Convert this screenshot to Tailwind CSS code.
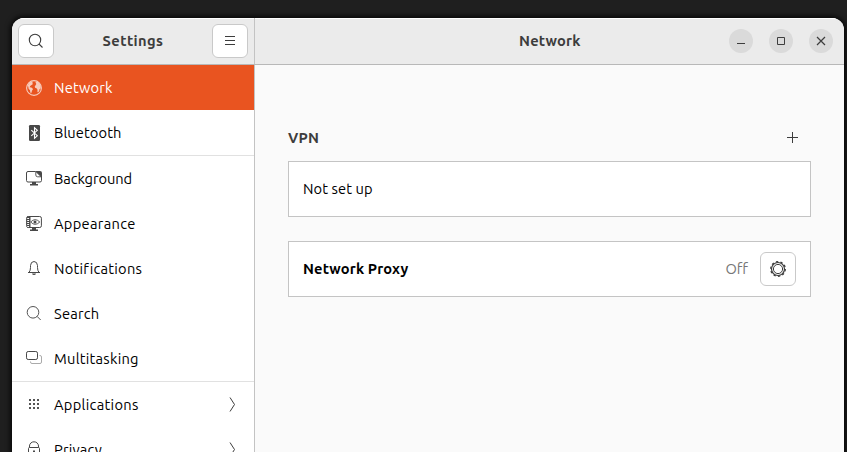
<!DOCTYPE html>
<html lang="en">
<head>
<meta charset="utf-8">
<title>Settings</title>
<script src="https://cdn.jsdelivr.net/npm/@tailwindcss/browser@4"></script>
</head>
<body class="h-[452px] w-[847px] overflow-hidden bg-[#1f1f1f] pt-[18px] pl-3 font-['Ubuntu','Noto_Sans',sans-serif] text-[14.667px] leading-5 text-black">
<div class="flex h-[434px] w-[832px] flex-col overflow-hidden rounded-t-xl bg-[#fafafa] shadow-[0_0_5px_2px_rgba(0,0,0,0.75)]">
  <header class="flex h-[47px] shrink-0 border-b border-[#b8b8b8] bg-[#ebebeb] font-bold text-[#3d3d3d] shadow-[inset_0_1px_0_#fff]">
    <div class="flex w-[243px] shrink-0 items-center justify-between border-r border-[#c3c3c3] px-1.5">
      <button class="flex h-[34px] w-9 items-center justify-center rounded-md border border-[#c9c9c9] bg-white" aria-label="Search">
        <svg class="size-4" viewBox="0 0 16 16" fill="none" stroke="#3d3d3d" stroke-width="1.1"><circle cx="7" cy="7" r="5.7"/><path d="M11 11l3.5 3.5"/></svg>
      </button>
      <h1 class="tracking-[0.4px]">Settings</h1>
      <button class="flex h-[34px] w-9 items-center justify-center rounded-md border border-[#c9c9c9] bg-white" aria-label="Menu">
        <svg class="size-4" viewBox="0 0 16 16" fill="#3d3d3d"><path d="M3 3h10v1H3zM3 7h10v1H3zM3 11h10v1H3z"/></svg>
      </button>
    </div>
    <div class="flex flex-1 items-center pr-[11px] pl-[264px]">
      <h2 class="tracking-[0.2px]">Network</h2>
      <div class="ml-auto flex gap-4">
        <button class="size-6 rounded-full bg-[#dadada]" aria-label="Minimize"><svg class="size-6" viewBox="0 0 24 24" fill="#3d3d3d"><path d="M8 14h8v1H8z"/></svg></button>
        <button class="size-6 rounded-full bg-[#dadada]" aria-label="Maximize"><svg class="size-6" viewBox="0 0 24 24" fill="none" stroke="#3d3d3d"><path d="M8.5 8.5h7v7h-7z"/></svg></button>
        <button class="size-6 rounded-full bg-[#dadada]" aria-label="Close"><svg class="size-6" viewBox="0 0 24 24" fill="none" stroke="#3d3d3d" stroke-width="1.2"><path d="M8 8l8 8M16 8l-8 8"/></svg></button>
      </div>
    </div>
  </header>
  <div class="flex min-h-0 flex-1 overflow-hidden">
    <nav class="w-[243px] shrink-0 border-r border-[#c3c3c3] bg-white">
      <a class="flex h-[45px] items-center gap-3 bg-[#e95420] px-3.5 text-white">
        <svg class="size-4 opacity-70" viewBox="0 0 16 16" fill="white"><circle cx="8" cy="8" r="7.4" fill="none" stroke="white" stroke-width="1.1"/><path d="M1.8 5.2L3.6 2.6 6 1.5l.8.6-.6 1 .8.8-1.4 1.2-1.4 1-.5 1.2 1.7.3 1.7 1.3-1 1.7-.8 2.7-1-.7-.3-2.3-1.4-1.5-.3-1.8z"/><path d="M9.4 2.2l2-.6 2.4 2.5 1.1 3-.5 1.8-.8.1-.4 2.1-1.2 1.3-.6-.7.1-2-1-1.5-1.4-.4-.4-1.4 1-1.5.6-1z"/></svg>
        <span class="tracking-[0.2px]">Network</span></a>
      <a class="flex h-[45px] items-center gap-3 px-3.5">
        <svg class="size-4" viewBox="0 0 16 16"><rect x="3" width="11" height="16" rx="1.2" fill="#484848"/><path d="M5.3 5.2l6 5.5-2.8 2.6V2.7l2.8 2.6-6 5.5" fill="none" stroke="white" stroke-width="1.1"/></svg>
        <span class="tracking-[0.1px]">Bluetooth</span></a>
      <a class="flex h-[46px] items-center gap-3 border-t border-[#e1e1e1] px-3.5">
        <svg class="size-4" viewBox="0 0 16 16"><path d="M9.5.5H2Q.5.5.5 2v7.5Q.5 11 2 11h12q1.500 0 1.500-1.500V6" fill="none" stroke="#484848"/><path d="M9 0h5a2 2 0 0 1 2 2v5zM6 11h4v2h2v1.500H4V13h2z" fill="#484848"/><path d="M9.8.5V4q0 1.800 1.800 1.800h3.600z" fill="white" stroke="#484848" stroke-width=".9"/></svg>
        <span class="tracking-[-0.05px]">Background</span></a>
      <a class="flex h-[45px] items-center gap-3 px-3.5">
        <svg class="size-4" viewBox="0 0 16 16"><rect x=".6" y=".5" width="14.8" height="11" rx="1.7" fill="none" stroke="#484848"/><path d="M6 11.500h4v2h2v1.500H4v-1.500h2zM1 .5h3.500v11H1z" fill="#484848"/><path d="M1.200 2.500h1.900M1.200 4.500h1.900M1.200 6.500h1.900M1.200 8.500h1.900M1.200 10.500h1.900" stroke="white"/><path d="M4.700 6Q9 1.300 13.800 6 9 10.700 4.700 6z" fill="white" stroke="#484848" stroke-width=".9"/><circle cx="9" cy="6" r="1.500" fill="#484848"/></svg>
        <span class="tracking-[0.3px]">Appearance</span></a>
      <a class="flex h-[45px] items-center gap-3 px-3.5">
        <svg class="size-4" viewBox="0 0 16 16"><path d="M2 11.500h12M3 11.500Q4.500 9.500 4.500 6.500V4.500Q4.800.6 8 .5q3.200.1 3.500 4v2q0 3 1.500 5" fill="none" stroke="#484848"/><path d="M6 12.500h4q-.4 1.500-2 1.500t-2-1.500z" fill="#484848"/></svg>
        <span class="tracking-[0.24px]">Notifications</span></a>
      <a class="flex h-[45px] items-center gap-3 px-3.5">
        <svg class="size-4" viewBox="0 0 16 16" fill="none" stroke="#555"><circle cx="7" cy="6.300" r="5.800"/><path d="M11 10.300l3.700 3.700"/></svg>
        <span class="tracking-[0.2px]">Search</span></a>
      <a class="flex h-[45px] items-center gap-3 px-3.5">
        <svg class="size-4" viewBox="0 0 16 16" fill="none"><rect x=".5" y=".5" width="11" height="8" rx="1.7" stroke="#484848"/><path d="M13.5 4.500h.5q1.500 0 1.500 1.500v5q0 1.500-1.500 1.500H6q-1.500 0-1.500-1.500v-.5" stroke="#aaa"/></svg>
        <span class="tracking-[0.26px]">Multitasking</span></a>
      <a class="flex h-[46px] items-center gap-3 border-t border-[#e1e1e1] px-3.5">
        <svg class="size-4" viewBox="0 0 16 16" fill="#555"><path d="M3 2h2v2H3zM7 2h2v2H7zM11 2h2v2h-2zM3 6h2v2H3zM7 6h2v2H7zM11 6h2v2h-2zM3 10h2v2H3zM7 10h2v2H7zM11 10h2v2h-2z"/></svg>
        <span class="tracking-[0.3px]">Applications</span>
        <svg class="ml-auto h-4 w-4" viewBox="0 0 16 16" fill="none" stroke="#3d3d3d"><path d="M6 .5l4.500 7L6 14.500"/></svg></a>
      <a class="flex h-[45px] items-center gap-3 px-3.5">
        <svg class="size-4 overflow-visible" viewBox="0 0 16 16" fill="none" stroke="#484848"><rect x="2.500" y="5.500" width="11" height="8" rx="1"/><path d="M3.500 5.500V4a4.500 4.200 0 0 1 9 0v1.500"/><path d="M7 8.500h2v2H7z" fill="#484848" stroke="none"/></svg>
        <span class="tracking-[0.2px]">Privacy</span>
        <svg class="ml-auto h-4 w-4" viewBox="0 0 16 16" fill="none" stroke="#3d3d3d"><path d="M6 .5l4.500 7L6 14.500"/></svg></a>
    </nav>
    <main class="flex-1 pt-14 pr-[33px] pl-[33px]">
      <div class="flex h-10 items-center justify-between pr-[11px] pb-[7px] font-bold text-[#3d3d3d]">
        <h3 class="tracking-[0.25px]">VPN</h3>
        <svg class="size-4" viewBox="0 0 16 16" fill="#3d3d3d"><path d="M8 2h1v11H8zM3 7h11v1H3z"/></svg>
      </div>
      <section class="flex h-14 items-center border border-[#c4c4c4] bg-white px-3.5 tracking-[0.1px]">Not set up</section>
      <section class="mt-6 flex h-14 items-center border border-[#c4c4c4] bg-white px-3.5">
        <span class="font-bold tracking-[0.15px]">Network Proxy</span>
        <span class="ml-auto text-[#777]">Off</span>
        <button class="ml-3 flex h-[34px] w-9 items-center justify-center rounded-md border border-[#c9c9c9] bg-white" aria-label="Proxy settings">
          <svg class="size-4" viewBox="0 0 16 16" fill="none" stroke="#3d3d3d"><circle cx="8" cy="8" r="4.600"/><circle cx="8" cy="8" r="6.500" stroke-width="1.200"/><circle cx="8" cy="8" r="7.300" stroke-width="1.300" stroke-dasharray="2.3 2.287"/></svg>
        </button>
      </section>
    </main>
  </div>
</div>
</body>
</html>
